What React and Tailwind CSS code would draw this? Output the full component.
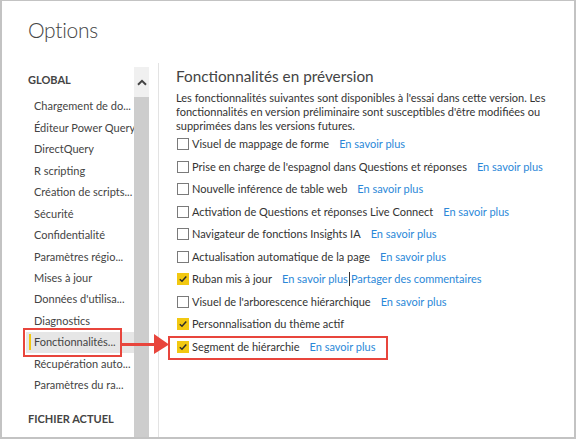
import React from "react";

const navItems = [
  "Chargement de do...",
  "Éditeur Power Query",
  "DirectQuery",
  "R scripting",
  "Création de scripts...",
  "Sécurité",
  "Confidentialité",
  "Paramètres régio...",
  "Mises à jour",
  "Données d'utilisa...",
  "Diagnostics",
  "Fonctionnalités...",
  "Récupération auto...",
  "Paramètres du ra...",
];

const features = [
  { label: "Visuel de mappage de forme", checked: false, links: ["En savoir plus"] },
  { label: "Prise en charge de l'espagnol dans Questions et réponses", checked: false, links: ["En savoir plus"] },
  { label: "Nouvelle inférence de table web", checked: false, links: ["En savoir plus"] },
  { label: "Activation de Questions et réponses Live Connect", checked: false, links: ["En savoir plus"] },
  { label: "Navigateur de fonctions Insights IA", checked: false, links: ["En savoir plus"] },
  { label: "Actualisation automatique de la page", checked: false, links: ["En savoir plus"] },
  { label: "Ruban mis à jour", checked: true, links: ["En savoir plus", "Partager des commentaires"] },
  { label: "Visuel de l'arborescence hiérarchique", checked: false, links: ["En savoir plus"] },
  { label: "Personnalisation du thème actif", checked: true, links: [] },
  { label: "Segment de hiérarchie", checked: true, links: ["En savoir plus"], boxed: true },
];

function Checkbox({ checked }) {
  if (checked) {
    return (
      <span className="w-[12px] h-[12px] bg-[#f2c811] flex items-center justify-center shrink-0">
        <svg width="10" height="10" viewBox="0 0 10 10">
          <path d="M1.8 5.2 L4 7.3 L8.3 2.6" fill="none" stroke="#2b2b2b" strokeWidth="1.5" />
        </svg>
      </span>
    );
  }
  return <span className="w-[12px] h-[12px] border-[1.5px] border-[#7a7a7a] bg-white shrink-0" />;
}

export default function App() {
  return (
    <div className="relative w-[576px] h-[439px] overflow-hidden bg-white border-t border-l-2 border-r-2 border-b-2 border-[#c3c3c3] font-['Lato',sans-serif] text-[#333]">
      <div className="h-[62px] pl-[26px] pt-[15px] text-[21px] leading-[28px] tracking-[-0.3px] font-light text-[#444]">Options</div>
      <div className="flex h-[374px]">
        {/* Sidebar */}
        <div className="w-[132px] shrink-0 flex flex-col">
          <div className="pl-[26px] pt-[9px] h-[33px] text-[11px] leading-[16px] font-bold text-[#444]">GLOBAL</div>
          {navItems.map((item, i) => {
            const sel = i === 11;
            return (
              <div
                key={item}
                className={`relative ml-[24px] pl-[8px] h-[21.45px] flex items-center text-[11px] whitespace-nowrap overflow-hidden text-[#444] ${sel ? "bg-[#e6e6e6]" : ""}`}
              >
                {sel && <span className="absolute left-[3px] top-[2px] bottom-[3px] w-[2px] bg-[#f2c811]" />}
                {item}
              </div>
            );
          })}
          <div className="pl-[26px] mt-[15px] text-[11px] leading-[16px] font-bold text-[#444]">FICHIER ACTUEL</div>
        </div>
        {/* Scrollbar */}
        <div className="w-[15px] shrink-0 mt-[4px] flex flex-col bg-[#f0f0f0]">
          <div className="h-[30px] flex items-center justify-center">
            <svg width="10" height="7" viewBox="0 0 10 7">
              <path d="M1 5.8 L5 1.8 L9 5.8" fill="none" stroke="#444" strokeWidth="2" />
            </svg>
          </div>
          <div className="flex-1 bg-[#cdcdcd]" />
        </div>
        <div className="w-[9px] shrink-0" />
        <div className="w-px shrink-0 bg-[#e3e3e3]" />
        {/* Content */}
        <div className="flex-1 min-w-0 pl-[17px]">
          <div className="pt-[3px] text-[15.3px] leading-[20px] text-[#444]">Fonctionnalités en préversion</div>
          <p className="mt-[5px] w-[372px] text-[11px] leading-[14px] text-[#333]">
            Les fonctionnalités suivantes sont disponibles à l'essai dans cette version. Les fonctionnalités en version préliminaire sont susceptibles d'être modifiées ou supprimées dans les versions futures.
          </p>
          <div className="flex flex-col">
            {features.map((f) => (
              <div key={f.label} className="relative h-[22.5px] flex items-center pl-[1px] text-[11px] whitespace-nowrap">
                <Checkbox checked={f.checked} />
                <span className="ml-[3px] text-[#333]">{f.label}</span>
                {f.links.length > 0 && (
                  <span className="ml-[10px] flex items-center text-[#2b88d8]">
                    {f.links.map((l, j) => (
                      <React.Fragment key={l}>
                        {j > 0 && <span className="mx-[1px] w-px h-[14px] bg-[#333]" />}
                        <span>{l}</span>
                      </React.Fragment>
                    ))}
                  </span>
                )}
                {f.boxed && (
                  <span className="absolute left-[-8px] top-[0px] w-[220px] h-[24px] border-[2.5px] border-[#e8453c]" />
                )}
              </div>
            ))}
          </div>
        </div>
      </div>
      {/* Annotation: red box on sidebar item + arrow */}
      <div className="absolute left-[21px] top-[327px] w-[99px] h-[29px] border-[2.5px] border-[#e8453c]" />
      <svg className="absolute left-[118px] top-[332px]" width="52" height="22" viewBox="0 0 52 22">
        <path d="M0 10 L36 10 L36 13 L0 13 Z" fill="#e8453c" />
        <path d="M34 1 L49 11.5 L34 21 Z" fill="#e8453c" />
      </svg>
    </div>
  );
}
